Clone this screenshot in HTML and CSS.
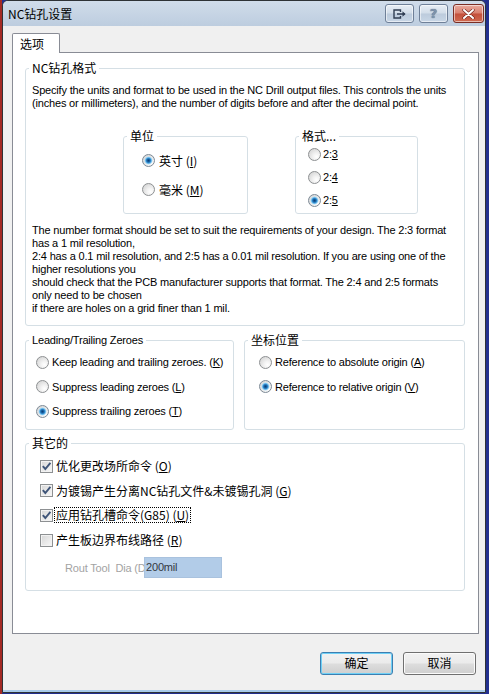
FILE: index.html
```html
<!DOCTYPE html>
<html>
<head>
<meta charset="utf-8">
<title>NC钻孔设置</title>
<link rel="stylesheet" href="styles.css">
</head>
<body>
<div class="window">
  <div class="titlebar">
    <span class="title cn">NC钻孔设置</span>
    <div class="caption">
      <span class="cbtn">
        <svg width="14" height="10" viewBox="0 0 14 10"><path d="M7.5 3 V1 H1 V9 H7.5 V7" fill="none" stroke="#2f3d52" stroke-width="1.4"/><path d="M4 5 H12" stroke="#2f3d52" stroke-width="1.6"/><path d="M9.5 2.2 L12.6 5 L9.5 7.8 Z" fill="#2f3d52"/></svg>
      </span>
      <span class="cbtn help">?</span>
      <span class="cbtn close">
        <svg width="13" height="10" viewBox="0 0 13 10"><path d="M2 1 L11 9 M11 1 L2 9" stroke="#6e2018" stroke-width="3.2" stroke-linecap="round"/><path d="M2 1 L11 9 M11 1 L2 9" stroke="#ffffff" stroke-width="2" stroke-linecap="round"/></svg>
      </span>
    </div>
  </div>
  <div class="client">
    <div class="tabs"><span class="tab cn">选项</span></div>
    <div class="panel">
      <fieldset class="group g-format">
        <legend class="cn">NC钻孔格式</legend>
        <p class="desc">Specify the units and format to be used in the NC Drill output files. This controls the units<br>(inches or millimeters), and the number of digits before and after the decimal point.</p>
        <div class="subgroups">
          <fieldset class="group sub units">
            <legend class="cn">单位</legend>
            <div class="opts">
              <div class="opt"><span class="radio on"></span><span class="cn">英寸 (<u>I</u>)</span></div>
              <div class="opt"><span class="radio"></span><span class="cn">毫米 (<u>M</u>)</span></div>
            </div>
          </fieldset>
          <fieldset class="group sub formats">
            <legend class="cn">格式...</legend>
            <div class="opts">
              <div class="opt"><span class="radio"></span><span>2:<u>3</u></span></div>
              <div class="opt"><span class="radio"></span><span>2:<u>4</u></span></div>
              <div class="opt"><span class="radio on"></span><span>2:<u>5</u></span></div>
            </div>
          </fieldset>
        </div>
        <p class="note">The number format should be set to suit the requirements of your design. The 2:3 format<br>has a 1 mil resolution,<br>2:4 has a 0.1 mil resolution, and 2:5 has a 0.01 mil resolution. If you are using one of the<br>higher resolutions you<br>should check that the PCB manufacturer supports that format. The 2:4 and 2:5 formats<br>only need to be chosen<br>if there are holes on a grid finer than 1 mil.</p>
      </fieldset>

      <div class="row2">
        <fieldset class="group zeros">
          <legend>Leading/Trailing Zeroes</legend>
          <div class="opts">
            <div class="opt"><span class="radio"></span><span>Keep leading and trailing zeroes. (<u>K</u>)</span></div>
            <div class="opt"><span class="radio"></span><span>Suppress leading zeroes (<u>L</u>)</span></div>
            <div class="opt"><span class="radio on"></span><span>Suppress trailing zeroes (<u>T</u>)</span></div>
          </div>
        </fieldset>
        <fieldset class="group origin">
          <legend class="cn">坐标位置</legend>
          <div class="opts">
            <div class="opt"><span class="radio"></span><span>Reference to absolute origin (<u>A</u>)</span></div>
            <div class="opt"><span class="radio on"></span><span>Reference to relative origin (<u>V</u>)</span></div>
          </div>
        </fieldset>
      </div>

      <fieldset class="group other">
        <legend class="cn">其它的</legend>
        <div class="opts">
          <div class="opt"><span class="chk on"><svg width="11" height="11" viewBox="0 0 11 11"><path d="M1.8 5.2 L4.3 8 L9.4 1.8" fill="none" stroke="#3e5478" stroke-width="1.9"/></svg></span><span class="lbl cn">优化更改场所命令 (<u>O</u>)</span></div>
          <div class="opt"><span class="chk on"><svg width="11" height="11" viewBox="0 0 11 11"><path d="M1.8 5.2 L4.3 8 L9.4 1.8" fill="none" stroke="#3e5478" stroke-width="1.9"/></svg></span><span class="lbl cn">为镀锡产生分离NC钻孔文件&amp;未镀锡孔洞 (<u>G</u>)</span></div>
          <div class="opt"><span class="chk on"><svg width="11" height="11" viewBox="0 0 11 11"><path d="M1.8 5.2 L4.3 8 L9.4 1.8" fill="none" stroke="#3e5478" stroke-width="1.9"/></svg></span><span class="lbl cn focus">应用钻孔槽命令(G85) (<u>U</u>)</span></div>
          <div class="opt"><span class="chk"></span><span class="lbl cn">产生板边界布线路径 (<u>R</u>)</span></div>
          <div class="rout">
            <span class="rout-label">Rout Tool&nbsp; Dia (D</span>
            <span class="rout-input">200mil</span>
          </div>
        </div>
      </fieldset>
    </div>
    <div class="buttons">
      <span class="btn default cn">确定</span>
      <span class="btn cn">取消</span>
    </div>
  </div>
</div>
</body>
</html>
```
FILE: styles.css
```css
* { box-sizing: border-box; }
html, body { margin: 0; padding: 0; }
body {
  width: 489px;
  height: 694px;
  overflow: hidden;
  background: linear-gradient(to right, #a42a24 0, #a42a24 2px, #23308f 2px);
  font-family: "Liberation Sans", Arial, sans-serif;
  font-size: 11px;
  letter-spacing: -0.18px;
  color: #000;
}
.cn {
  font-family: "Noto Sans CJK SC", "Liberation Sans", sans-serif;
  font-size: 12px;
  letter-spacing: 0;
}
u { text-decoration: underline; text-underline-offset: 1px; }

.window {
  margin-left: 2px;
  width: 484px;
  height: 693px;
  border: 1px solid #2e3236;
  border-radius: 6px 6px 0 0;
  background: #f0f0f0;
  display: flex;
  flex-direction: column;
  overflow: hidden;
}

/* title bar */
.titlebar {
  flex: none;
  height: 25px;
  display: flex;
  justify-content: space-between;
  align-items: flex-start;
  background: linear-gradient(#d0dcea, #bdcddf);
}
.title {
  padding-left: 5px;
  line-height: 25px;
  color: #000;
}
.caption {
  display: flex;
  padding-top: 3px;
  padding-right: 1px;
}
.cbtn {
  width: 29px;
  height: 19px;
  margin-left: 5px;
  border: 1px solid #6f8098;
  border-radius: 3px;
  background: linear-gradient(#e8eef5, #d2dde9 48%, #bccbdc 52%, #c8d6e6);
  box-shadow: inset 0 0 0 1px rgba(255,255,255,0.55);
  display: flex;
  align-items: center;
  justify-content: center;
}
.cbtn.help {
  font-family: "DejaVu Sans", sans-serif;
  font-size: 13px;
  font-weight: bold;
  color: #7f93ad;
  line-height: 17px;
  text-shadow: 0 0 1px #3f4d62;
}
.cbtn.close {
  width: 31px;
  border-color: #7a2d24;
  background: linear-gradient(#e8a99d, #d9806f 48%, #c4503c 52%, #cf6a50);
}

/* client */
.client {
  flex: 1;
  display: flex;
  flex-direction: column;
  padding-left: 9px;
  border-bottom: 2px solid #a9cbe9;
}
.tabs {
  margin-top: 7px;
  height: 19px;
  display: flex;
}
.tab {
  position: relative;
  z-index: 1;
  width: 48px;
  height: 20px;
  border: 1px solid #898c95;
  border-bottom: 0;
  border-radius: 2px 2px 0 0;
  background: #fff;
  padding-left: 7px;
  line-height: 19px;
}
.panel {
  width: 467px;
  height: 582px;
  border: 1px solid #898c95;
  background: #fff;
  padding: 8px 13px 0 12px;
}

/* group boxes */
fieldset.group {
  margin: 0;
  padding: 0;
  min-width: 0;
  border: 1px solid #d5dfe5;
  border-radius: 3px;
}
.group > legend {
  margin-left: 3px;
  padding: 0 3px;
  height: 14px;
  line-height: 14px;
  white-space: nowrap;
}
.desc, .note {
  margin: 0 0 0 6px;
  line-height: 13px;
  white-space: nowrap;
}
.desc { margin-top: 9px; }
.note { margin-top: 10px; margin-bottom: 10px; }

.subgroups {
  display: flex;
  gap: 47px;
  margin: 19px 0 0 97px;
}
fieldset.sub { height: 85px; }
fieldset.units { width: 125px; }
fieldset.formats { width: 123px; }

.opts {
  display: flex;
  flex-direction: column;
}
.opt {
  display: flex;
  align-items: center;
  gap: 3px;
  height: 16px;
  white-space: nowrap;
}
.units .opts { padding: 9px 0 0 18px; gap: 13px; }
.units .opt { gap: 4px; }
.formats .opts { padding: 3px 0 0 12px; gap: 7px; }
.formats .opt { gap: 2px; }

.row2 {
  display: flex;
  gap: 10px;
  margin-top: 7px;
}
.row2 fieldset.group { height: 97px; }
fieldset.zeros { width: 209px; }
fieldset.origin { flex: 1; }
.zeros .opts { padding: 7px 0 0 10px; gap: 8.5px; }
.origin .opts { padding: 7px 0 0 14px; gap: 8.5px; }

fieldset.group.other {
  margin-top: 6px;
  height: 155px;
}
.other .opts { padding: 8px 0 0 14px; gap: 8.7px; }
.other .opt { gap: 1px; }
.lbl {
  border: 1px solid transparent;
  padding: 0 1px;
  line-height: 14px;
}
.lbl.focus { border: 1px dotted #000; }

.rout {
  display: flex;
  align-items: center;
  height: 21px;
  margin: 0.3px 0 0 25px;
}
.rout-label {
  flex: none;
  width: 79px;
  white-space: nowrap;
  color: #a3a3a3;
}
.rout-input {
  flex: none;
  width: 78px;
  height: 21px;
  background: #b2cce8;
  border: 1px solid #a9c2de;
  padding-left: 1px;
  line-height: 19px;
  color: #33383f;
}

/* radios & checkboxes */
.radio {
  flex: none;
  width: 13px;
  height: 13px;
  border-radius: 50%;
  border: 1px solid #8d9092;
  background: radial-gradient(circle at 68% 70%, #ffffff 0, #f3f3f3 30%, #d0d0d0 95%);
}
.radio.on {
  border-color: #7d8a96;
  background:
    radial-gradient(circle at 50% 50%, #0a3f78 0, #155a9a 1.2px, #2f86c8 2.2px, #7ec6f1 3.2px, rgba(160,214,245,0.6) 3.8px, rgba(255,255,255,0) 4.3px),
    radial-gradient(circle at 68% 70%, #ffffff 0, #f3f3f3 30%, #d0d0d0 95%);
}
.chk {
  flex: none;
  width: 13px;
  height: 13px;
  border: 1px solid #8d9092;
  background: linear-gradient(135deg, #d6d6d6, #f8f8f8);
  box-shadow: inset 0 0 0 1px #f2f2f2;
  display: flex;
  align-items: center;
  justify-content: center;
}
.chk svg { display: block; }

/* dialog buttons */
.buttons {
  display: flex;
  justify-content: flex-end;
  gap: 10px;
  margin-top: 18px;
  padding-right: 9px;
}
.btn {
  width: 73px;
  height: 23px;
  border: 1px solid #707070;
  border-radius: 3px;
  background: linear-gradient(#f2f2f2 0%, #ebebeb 48%, #dddddd 52%, #cfcfcf 100%);
  box-shadow: inset 0 0 0 1px #fbfbfb;
  text-align: center;
  line-height: 20px;
}
.btn.default {
  border-color: #3c7fb1;
  box-shadow: inset 0 0 0 1px #6fd0f6;
}
```
